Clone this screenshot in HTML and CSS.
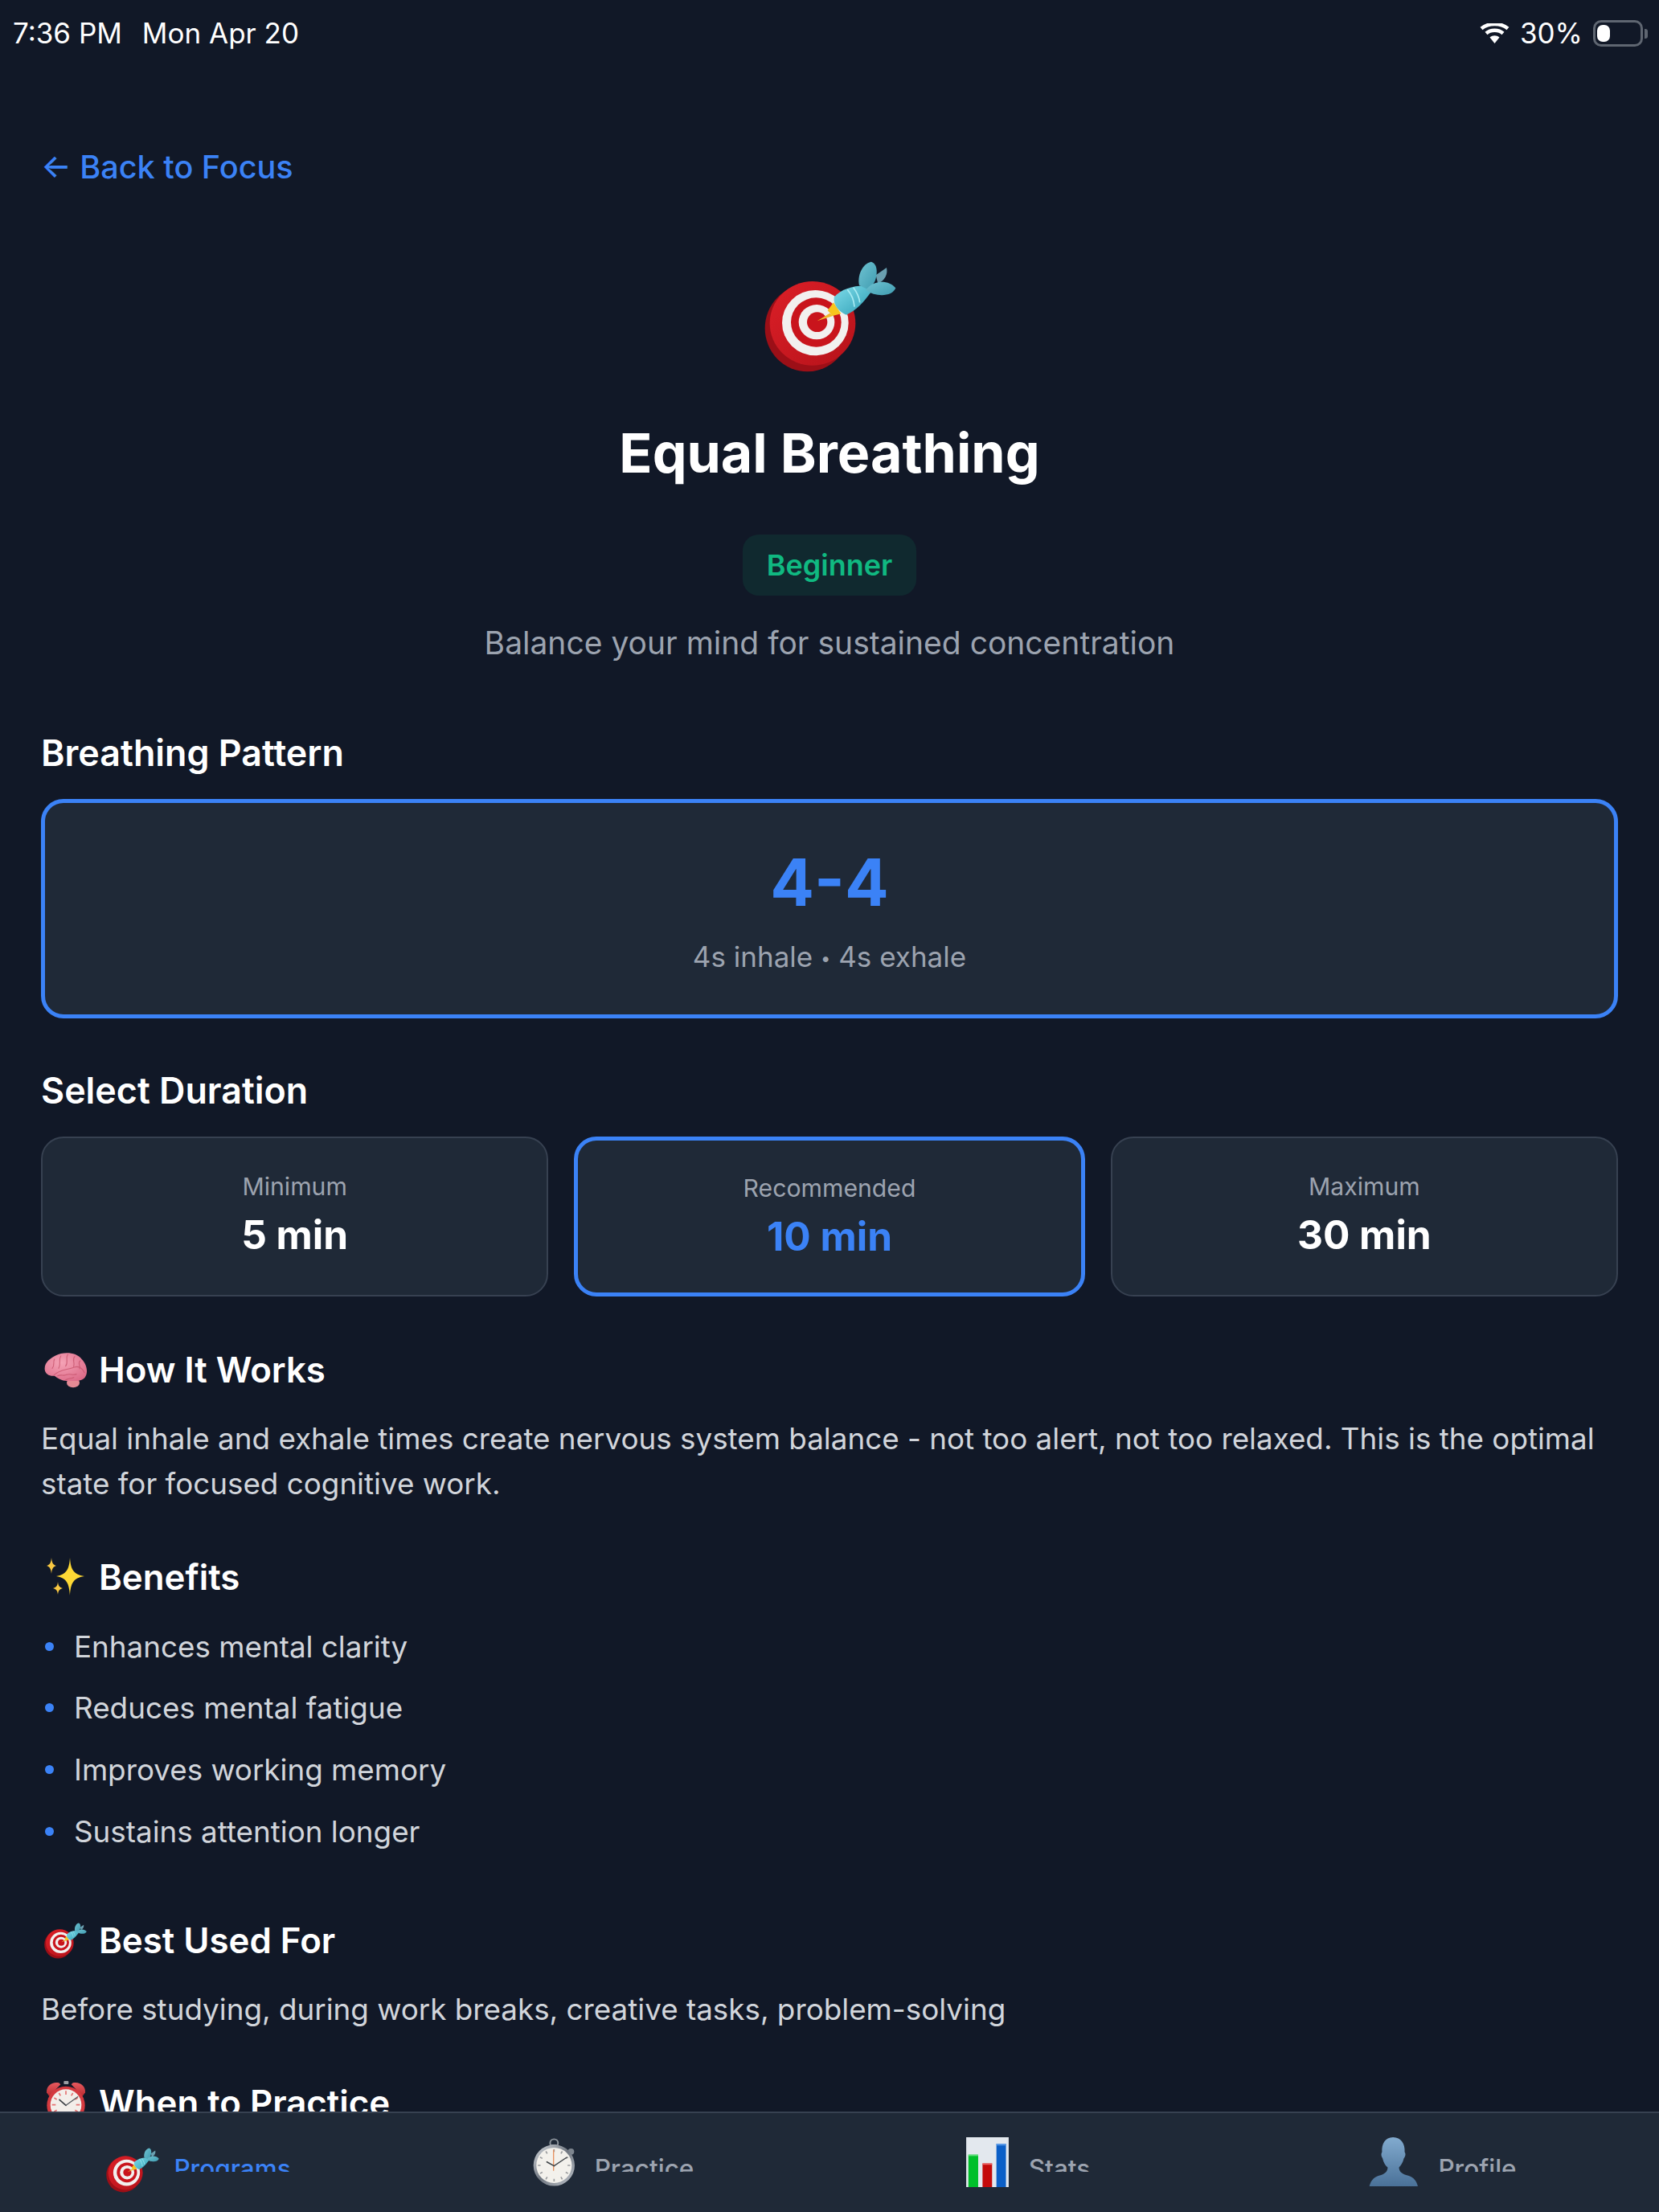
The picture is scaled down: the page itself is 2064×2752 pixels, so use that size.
FILE: index.html
```html
<!DOCTYPE html>
<html lang="en">
<head>
<meta charset="utf-8">
<title>Equal Breathing</title>
<link rel="stylesheet" href="styles.css">
</head>
<body>
<svg class="defs" width="0" height="0" aria-hidden="true">
  <defs>
    <linearGradient id="fin" x1="0" y1="0" x2="1" y2="1"><stop offset="0" stop-color="#6fc3d2"/><stop offset="1" stop-color="#3f9bb0"/></linearGradient>
    <linearGradient id="barrel" x1="0" y1="0" x2="1" y2="1"><stop offset="0" stop-color="#7fdcea"/><stop offset="1" stop-color="#2f9fb5"/></linearGradient>
    <linearGradient id="disc" x1="0" y1="0" x2="1" y2="1"><stop offset="0" stop-color="#dc1f27"/><stop offset="1" stop-color="#b5121a"/></linearGradient>
    <linearGradient id="metal" x1="0" y1="0" x2="1" y2="1"><stop offset="0" stop-color="#d5d9de"/><stop offset=".5" stop-color="#6f7680"/><stop offset="1" stop-color="#c3c8ce"/></linearGradient>
    <linearGradient id="person-fill" x1="0" y1="0" x2="0" y2="1"><stop offset="0" stop-color="#82abcf"/><stop offset="1" stop-color="#4a7198"/></linearGradient>
    <linearGradient id="bell" x1="0" y1="0" x2="0" y2="1"><stop offset="0" stop-color="#e85a5f"/><stop offset="1" stop-color="#b92a30"/></linearGradient>
    <radialGradient id="brain" cx=".4" cy=".35" r=".75"><stop offset="0" stop-color="#f5a3b6"/><stop offset="1" stop-color="#dc6a88"/></radialGradient>
    <symbol id="target" viewBox="28 28 492 414">
      <ellipse cx="188" cy="278" rx="158" ry="162" fill="#9c0f17"/>
      <ellipse cx="208" cy="260" rx="160" ry="157" fill="url(#disc)"/>
      <ellipse cx="218" cy="258" rx="124" ry="122" fill="#f2f0ef"/>
      <ellipse cx="221" cy="256" rx="94" ry="92" fill="#c9141c"/>
      <ellipse cx="223" cy="255" rx="67" ry="65" fill="#f2f0ef"/>
      <ellipse cx="225" cy="255" rx="38" ry="37" fill="#c9141c"/>
      <path d="M225 251 L272 222 L284 232 Z" fill="#f0b92c"/>
      <path d="M264 212 L286 182 L314 224 L282 232 Z" fill="#f7c51e"/>
      <path d="M288 162 C318 128 370 116 416 120 L424 146 C402 176 372 212 334 228 C308 218 284 192 288 162 Z" fill="url(#barrel)"/>
      <path d="M338 134 C352 150 362 172 364 198 M360 126 C372 142 382 160 384 182" fill="none" stroke="#a9ecf3" stroke-width="5"/>
      <path d="M444 80 L484 52 C490 78 476 100 452 112 Z" fill="#6a9fb0"/>
      <path d="M382 118 C374 84 392 38 426 30 C450 36 452 72 440 104 L420 136 Z" fill="url(#fin)"/>
      <path d="M406 136 C434 96 492 96 518 128 C506 160 446 164 406 136 Z" fill="url(#fin)"/>
    </symbol>
    <symbol id="stopwatch" viewBox="42 28 158 182">
      <circle cx="122" cy="47" r="15" fill="none" stroke="#8d949c" stroke-width="6"/>
      <circle cx="186" cy="79" r="12" fill="#7d858e"/>
      <rect x="112" y="52" width="20" height="12" fill="#9aa0a7"/>
      <circle cx="122" cy="131" r="78" fill="url(#metal)"/>
      <circle cx="122" cy="131" r="67" fill="#f3f1ec"/>
      <g stroke="#9a9c9e" stroke-width="5">
        <path d="M122 70V80M122 182V192M61 131H71M173 131H183M91 78L96 87M153 78L148 87M69 100L78 105M175 100L166 105M69 162L78 157M175 162L166 157M91 184L96 175M153 184L148 175"/>
      </g>
      <path d="M120 72V152" stroke="#e7905f" stroke-width="4"/>
      <path d="M122 133L95 118" stroke="#3e4347" stroke-width="5" stroke-linecap="round"/>
      <path d="M122 133L170 101" stroke="#3e4347" stroke-width="4" stroke-linecap="round"/>
    </symbol>
    <symbol id="bars" viewBox="42 33 156 183">
      <rect x="42" y="33" width="156" height="183" fill="#e3e8ee"/>
      <rect x="50" y="97" width="36" height="119" fill="#00bf2a"/>
      <rect x="102" y="129" width="35" height="87" fill="#c40a0a"/>
      <rect x="153" y="57" width="35" height="159" fill="#0b5fc7"/>
      <rect x="50" y="97" width="36" height="5" fill="#5fe07a"/>
      <rect x="102" y="129" width="35" height="5" fill="#e66"/>
      <rect x="153" y="57" width="35" height="6" fill="#5b9be8"/>
    </symbol>
    <symbol id="person-ico" viewBox="30 30 182 182">
      <path d="M120 30C150 30 165 55 163 85C167 90 167 100 160 108C156 125 148 136 142 142C142 155 150 165 168 170C192 175 206 187 212 212H32C38 187 52 175 76 170C92 165 100 155 100 142C92 136 85 125 81 108C75 100 75 90 79 85C77 55 90 30 120 30Z" fill="url(#person-fill)"/>
    </symbol>
    <symbol id="clock" viewBox="45 24 150 186">
      <path d="M48 70C46 44 70 28 94 34L100 40L58 84Z" fill="url(#bell)"/>
      <path d="M192 70C194 44 170 28 146 34L140 40L182 84Z" fill="url(#bell)"/>
      <rect x="112" y="27" width="18" height="12" rx="3" fill="#9a9ea3"/>
      <circle cx="120" cy="118" r="71" fill="#d5393f"/>
      <circle cx="120" cy="116" r="58" fill="#f3eeea"/>
      <g stroke="#e57272" stroke-width="5">
        <path d="M120 64V78M120 154V168M68 116H82M158 116H172M94 72L100 82M146 72L140 82M76 90L86 96M164 90L154 96M76 142L86 136M164 142L154 136"/>
      </g>
      <path d="M120 118L96 97" stroke="#3c4045" stroke-width="5" stroke-linecap="round"/>
      <path d="M120 118L164 86" stroke="#55595e" stroke-width="4" stroke-linecap="round"/>
    </symbol>
    <symbol id="brain-ico" viewBox="40 35 162 135">
      <ellipse cx="148" cy="150" rx="24" ry="18" fill="#e58a95"/>
      <path d="M42 100C40 74 64 58 84 48C110 34 160 34 180 62C198 80 206 110 192 130C178 146 150 144 130 142C112 146 92 134 78 124C60 126 44 118 42 100Z" fill="url(#brain)"/>
      <g fill="none" stroke="#c9566f" stroke-width="3.5" stroke-linecap="round" opacity=".8">
        <path d="M76 122C92 102 124 102 152 92C170 86 182 96 190 112"/>
        <path d="M78 62C72 76 80 86 70 96M102 50C92 64 104 78 94 96M128 44C118 58 132 72 120 88M154 52C142 64 156 72 150 90M174 68C164 78 176 84 172 98"/>
        <path d="M90 124C104 118 112 126 124 120C136 114 144 124 160 118M120 140C128 132 142 136 150 130"/>
      </g>
    </symbol>
    <symbol id="sparkle" viewBox="0 0 48 48">
      <path d="M29 0C30 14 33 21 47 23C33 25 30 32 29 47C28 32 25 25 12 23C25 21 28 14 29 0Z" fill="#fdd835"/>
      <path d="M6 0C6.500 6 8 9 12 10C8 11 6.500 14 6 20C5.500 14 4 11 0 10C4 9 5.500 6 6 0Z" fill="#f9c842"/>
      <path d="M14 30C14.500 35 16 37 20 38C16 39 14.500 41 14 46C13.500 41 12 39 8 38C12 37 13.500 35 14 30Z" fill="#f9c842"/>
    </symbol>
  </defs>
</svg>
<div class="app">
  <header class="status">
    <div class="status-left"><span>7:36 PM</span><span>Mon Apr 20</span></div>
    <div class="status-right">
      <svg class="wifi" viewBox="0 0 37 25"><path d="M18.500 25L12.500 17.500C16 14.500 21 14.500 24.500 17.500Z" fill="#fff"/><path d="M8 12.500C13.500 7.500 23.500 7.500 29 12.500" fill="none" stroke="#fff" stroke-width="4.500"/><path d="M2 6.500C11 -1 26 -1 35 6.500" fill="none" stroke="#fff" stroke-width="4.500"/></svg>
      <span>30%</span>
      <div class="battery"><div class="battery-level"></div></div>
    </div>
  </header>

  <main class="content">
    <a class="back">← Back to Focus</a>

    <section class="hero">
      <svg class="hero-emoji"><use href="#target"/></svg>
      <h1 class="title">Equal Breathing</h1>
      <span class="badge">Beginner</span>
      <p class="subtitle">Balance your mind for sustained concentration</p>
    </section>

    <h2 class="label-heading pattern-heading">Breathing Pattern</h2>
    <div class="pattern-card">
      <div class="pattern-value">4-4</div>
      <div class="pattern-desc">4s inhale <span class="dot">•</span> 4s exhale</div>
    </div>

    <h2 class="label-heading duration-heading">Select Duration</h2>
    <div class="durations">
      <div class="duration"><div class="duration-label">Minimum</div><div class="duration-value">5 min</div></div>
      <div class="duration selected"><div class="duration-label">Recommended</div><div class="duration-value">10 min</div></div>
      <div class="duration"><div class="duration-label">Maximum</div><div class="duration-value">30 min</div></div>
    </div>

    <section class="info">
      <h3 class="info-heading"><span class="emoji-box"><svg class="emoji-brain"><use href="#brain-ico"/></svg></span>How It Works</h3>
      <p class="body-text">Equal inhale and exhale times create nervous system balance - not too alert, not too relaxed. This is the optimal state for focused cognitive work.</p>
    </section>

    <section class="info">
      <h3 class="info-heading"><span class="emoji-box"><svg class="emoji-sparkle"><use href="#sparkle"/></svg></span>Benefits</h3>
      <ul class="benefits">
        <li>Enhances mental clarity</li>
        <li>Reduces mental fatigue</li>
        <li>Improves working memory</li>
        <li>Sustains attention longer</li>
      </ul>
    </section>

    <section class="info">
      <h3 class="info-heading"><span class="emoji-box"><svg class="emoji-target"><use href="#target"/></svg></span>Best Used For</h3>
      <p class="body-text">Before studying, during work breaks, creative tasks, problem-solving</p>
    </section>

    <section class="info">
      <h3 class="info-heading"><span class="emoji-box"><svg class="emoji-clock"><use href="#clock"/></svg></span>When to Practice</h3>
    </section>
  </main>

  <nav class="tabs">
    <div class="tab active"><svg class="tab-target"><use href="#target"/></svg><span class="tab-label">Programs</span></div>
    <div class="tab"><svg class="tab-watch"><use href="#stopwatch"/></svg><span class="tab-label">Practice</span></div>
    <div class="tab"><svg class="tab-bars"><use href="#bars"/></svg><span class="tab-label">Stats</span></div>
    <div class="tab"><svg class="tab-person"><use href="#person-ico"/></svg><span class="tab-label">Profile</span></div>
  </nav>
</div>
</body>
</html>
```

FILE: styles.css
```css
* { box-sizing: border-box; }
html, body { margin: 0; padding: 0; }
body { background: #111827; color: #fff; font-family: Inter, "Liberation Sans", sans-serif; }
.defs { position: absolute; }
h1, h2, h3, p, ul { margin: 0; padding: 0; }
svg { display: block; }

.app { width: 2064px; height: 2752px; display: flex; flex-direction: column; overflow: hidden; }

.status { height: 82px; flex: none; display: flex; justify-content: space-between; align-items: center; padding: 0 20px 0 16px; font-size: 35px; line-height: 40px; color: #fff; }
.status-left { display: flex; gap: 25px; }
.status-right { display: flex; align-items: center; }
.wifi { width: 37px; height: 25px; margin-right: 13px; }
.battery { width: 62px; height: 33px; margin-left: 13px; border: 3px solid #5f6671; border-radius: 10px; padding: 3px 2px; position: relative; }
.battery::after { content: ""; position: absolute; right: -9px; top: 8px; width: 4px; height: 12px; border-radius: 0 3px 3px 0; background: #5f6671; }
.battery-level { width: 16px; height: 100%; background: #fff; border-radius: 7px; }

.content { flex: 1; min-height: 0; overflow: hidden; padding: 102px 51px 0; }
.back { display: block; font-size: 39.6px; line-height: 48px; font-weight: 500; color: #3b82f6; }

.hero { margin-top: 93px; display: flex; flex-direction: column; align-items: center; }
.hero-emoji { width: 164px; height: 138px; margin-left: 1px; }
.title { margin-top: 56px; font-size: 68px; line-height: 88px; font-weight: 700; color: #fff; }
.badge { margin-top: 58px; height: 76px; padding: 0 30px; display: flex; align-items: center; border-radius: 20px; background: #10292f; color: #10b981; font-size: 36px; font-weight: 600; }
.subtitle { margin-top: 31px; font-size: 39px; line-height: 56px; color: #9ca3af; }

.label-heading { font-size: 44.8px; line-height: 56px; font-weight: 600; color: #fff; }
.pattern-heading { margin-top: 81px; margin-bottom: 29px; }
.duration-heading { margin-top: 62px; margin-bottom: 29px; }

.pattern-card { height: 273px; padding: 49px 40px; border: 5px solid #3b82f6; border-radius: 28px; background: #1f2937; text-align: center; }
.pattern-value { font-size: 81px; line-height: 100px; font-weight: 700; color: #3b82f6; }
.pattern-desc { margin-top: 18px; font-size: 35px; line-height: 48px; color: #9ca3af; }
.dot { font-size: 22px; vertical-align: 3px; }

.durations { display: flex; gap: 32px; }
.duration { flex: 1 1 0; box-sizing: content-box; padding: 40px 16px 39px; border: 2px solid #374151; border-radius: 28px; background: #1f2937; text-align: center; }
.duration.selected { border: 5px solid #3b82f6; padding-top: 39px; padding-bottom: 38px; padding-left: 15px; padding-right: 15px; }
.duration-label { font-size: 30.2px; line-height: 40px; color: #9ca3af; }
.duration-value { margin-top: 8px; font-size: 49.6px; line-height: 64px; font-weight: 700; color: #fff; }
.selected .duration-value { color: #3b82f6; }

.info { margin-top: 60px; }
.durations + .info { margin-top: 63px; }
.info-heading { display: flex; align-items: center; height: 56px; font-size: 43.8px; font-weight: 600; color: #fff; margin-bottom: 30px; }
.emoji-box { width: 57px; height: 56px; margin-right: 13px; margin-left: 2px; display: flex; align-items: center; justify-content: center; flex: none; }
.emoji-brain { width: 54px; height: 45px; }
.emoji-sparkle { width: 48px; height: 48px; }
.emoji-target { width: 53px; height: 45px; }
.emoji-clock { width: 50px; height: 62px; margin-top: 6px; }

.body-text { font-size: 36.8px; line-height: 56px; color: #d1d5db; }
.benefits { list-style: none; display: flex; flex-direction: column; gap: 20.8px; padding-bottom: 20px; }
.benefits li { display: flex; align-items: center; gap: 25px; height: 56px; font-size: 36.8px; color: #d1d5db; }
.benefits li::before { content: ""; width: 11px; height: 11px; margin-left: 5px; border-radius: 50%; background: #3b82f6; flex: none; }

.tabs { height: 125px; flex: none; display: grid; grid-template-columns: repeat(4, 1fr); background: #1f2937; border-top: 2px solid #374151; }
.tab { display: flex; align-items: center; justify-content: center; gap: 25px; padding: 0 22px 2px 0; color: #9ca3af; }
.tab.active { color: #3b82f6; gap: 18px; }
.tab-label { display: block; height: 24px; overflow: hidden; padding-top: 4px; font-size: 31.5px; line-height: 32px; font-weight: 500; }
.tab-target { width: 66px; height: 56px; margin-top: 20px; }
.tab-watch { width: 52px; height: 60px; }
.tab-bars { width: 53px; height: 62px; }
.tab-person { width: 61px; height: 61px; }
```
